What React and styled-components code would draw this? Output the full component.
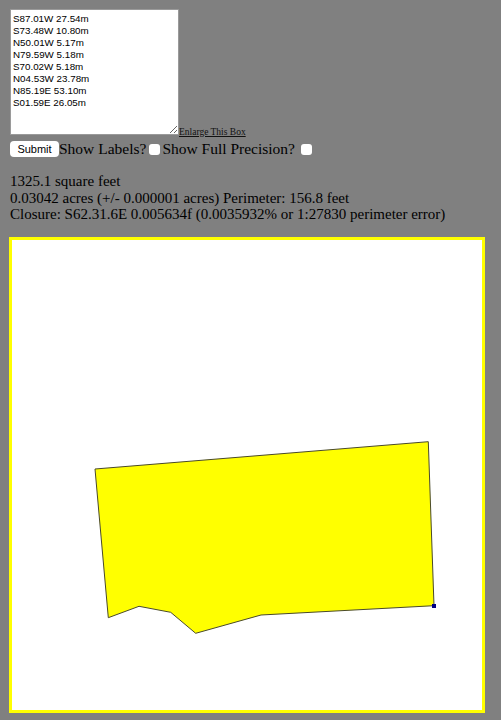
import styled, { createGlobalStyle } from "styled-components";

/* ---------------- css ---------------- */
const GlobalStyle = createGlobalStyle`
  html, body {
    margin: 0;
    padding: 0;
    background: #808080;
  }
  body {
    font-family: "Liberation Serif", "Times New Roman", serif;
    font-size: 15px;
    color: #000;
  }
`;

const StyledPage = styled.div`
  padding: 9px 16px 7px 9px;
  width: 476px;
`;

/* ---------------- form ---------------- */
const StyledForm = styled.form`
  margin: 0;
  padding: 0;
`;
const StyledBoxRow = styled.div`
  display: flex;
  align-items: flex-end;
  padding-left: 1px;
`;
const StyledBox = styled.textarea`
  margin: 0;
  width: 169px;
  height: 126px;
  box-sizing: border-box;
  border: 1px solid #9a9a9a;
  border-radius: 1px;
  background: #fff;
  padding: 3px 2px;
  font-family: "Liberation Sans", Arial, sans-serif;
  font-size: 9.8px;
  line-height: 12px;
  color: #000;
  resize: both;
  outline: none;
`;
const StyledEnlarge = styled.a`
  font-size: 9.5px;
  line-height: 10px;
  color: #111;
  text-decoration: underline;
  margin-bottom: -2px;
  cursor: pointer;
`;
const StyledControls = styled.div`
  display: flex;
  align-items: center;
  height: 17px;
  margin-top: 5px;
  padding-left: 1px;
  white-space: nowrap;
`;
const StyledSubmit = styled.button`
  margin: 0;
  width: 49px;
  height: 16px;
  padding: 0;
  border: none;
  border-radius: 4px;
  background: #fff;
  font-family: "Liberation Sans", Arial, sans-serif;
  font-size: 11px;
  color: #000;
`;
const StyledLabel = styled.label`
  font-size: 15.5px;
  margin-left: ${(p) => p.$gap || 0}px;
`;
const StyledCheck = styled.input`
  appearance: none;
  margin: 1px 0 0 ${(p) => p.$gap || 0}px;
  width: 11px;
  height: 11px;
  border-radius: 3px;
  background: #fff;
  border: none;
`;

/* ---------------- results ---------------- */
const StyledResults = styled.div`
  margin-top: 16px;
  padding-left: 1px;
  line-height: 16.6px;
  white-space: nowrap;
`;

/* ---------------- plot ---------------- */
const StyledPlot = styled.div`
  margin-top: 14px;
  width: 476px;
  height: 476px;
  box-sizing: border-box;
  border: 3px solid #ffff00;
  background: #fff;
`;

const parcel = [
  [83, 229],
  [416.3, 201.7],
  [422, 365.7],
  [249, 375],
  [183.7, 393.3],
  [158.7, 372.3],
  [127, 366.3],
  [96.3, 377.7],
];

/* ---------------- jsx ---------------- */
const App = () => {
  const calls = [
    "S87.01W 27.54m",
    "S73.48W 10.80m",
    "N50.01W 5.17m",
    "N79.59W 5.18m",
    "S70.02W 5.18m",
    "N04.53W 23.78m",
    "N85.19E 53.10m",
    "S01.59E 26.05m",
  ].join("\n");

  return (
    <StyledPage>
      <GlobalStyle />
      <StyledForm onSubmit={(e) => e.preventDefault()}>
        <StyledBoxRow>
          <StyledBox defaultValue={calls} spellCheck={false} />
          <StyledEnlarge>Enlarge This Box</StyledEnlarge>
        </StyledBoxRow>
        <StyledControls>
          <StyledSubmit type="submit">Submit</StyledSubmit>
          <StyledLabel>Show Labels?</StyledLabel>
          <StyledCheck type="checkbox" $gap={3} />
          <StyledLabel $gap={2}>Show Full Precision?</StyledLabel>
          <StyledCheck type="checkbox" $gap={6} />
        </StyledControls>
      </StyledForm>

      <StyledResults>
        1325.1 square feet
        <br />
        0.03042 acres (+/- 0.000001 acres) Perimeter: 156.8 feet
        <br />
        Closure: S62.31.6E 0.005634f (0.0035932% or 1:27830 perimeter error)
      </StyledResults>

      <StyledPlot>
        <svg width="470" height="470" viewBox="0 0 470 470">
          <polygon
            points={parcel.map((p) => p.join(",")).join(" ")}
            fill="#ffff00"
            stroke="#4a4a2a"
            strokeWidth="1"
          />
          <rect x="420" y="364" width="4" height="4" fill="#000080" />
        </svg>
      </StyledPlot>
    </StyledPage>
  );
};

export default App;
